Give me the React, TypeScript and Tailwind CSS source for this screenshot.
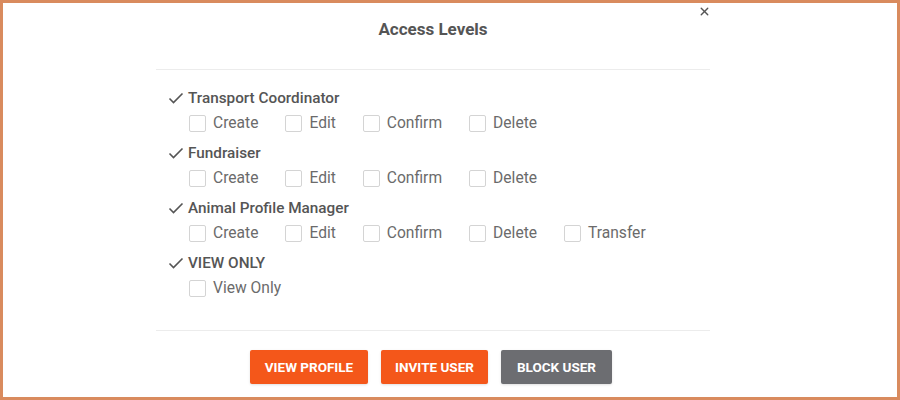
import { X } from 'lucide-react';

const groups = [
  { title: 'Transport Coordinator', perms: ['Create', 'Edit', 'Confirm', 'Delete'] },
  { title: 'Fundraiser', perms: ['Create', 'Edit', 'Confirm', 'Delete'] },
  { title: 'Animal Profile Manager', perms: ['Create', 'Edit', 'Confirm', 'Delete', 'Transfer'] },
  { title: 'VIEW ONLY', perms: ['View Only'] },
];

function Check() {
  return (
    <svg width="16" height="16" viewBox="0 0 16 16" className="shrink-0">
      <polyline points="1.5,8.5 5.5,12.5 14.5,3.5" fill="none" stroke="#555" strokeWidth="1.6" />
    </svg>
  );
}

export default function App() {
  return (
    <div className="relative w-[900px] h-[400px] bg-white border-[3px] border-[#d98b5e] font-['Roboto',sans-serif] overflow-hidden">
      <div className="ml-[153px] w-[554px] relative">
        {/* Header */}
        <div className="h-[67px] pt-[14px] border-b border-[#ececec] text-center">
          <h2 className="text-[17px] leading-6 font-bold text-[#555]">Access Levels</h2>
        </div>
        <button className="absolute -right-[1px] top-[2px] text-[#555]">
          <X size={13} strokeWidth={2.5} />
        </button>

        {/* Body */}
        <div className="pl-[12px] pt-[17px] pb-[29px] border-b border-[#ececec]">
          {groups.map((g) => (
            <div key={g.title} className="mb-[6px] last:mb-0">
              <div className="flex items-center gap-[4px] h-[22px]">
                <Check />
                <span className="text-[15.3px] font-medium text-[#555]">{g.title}</span>
              </div>
              <div className="flex items-center pl-[21px] h-[24px] mt-[3px]">
                {g.perms.map((p) => (
                  <label key={p} className="flex items-center mr-[27px]">
                    <span className="w-[17px] h-[17px] border border-[#d4d4d4] rounded-[2px] bg-white" />
                    <span className="ml-[7px] text-[15.6px] text-[#6b6b6b]">{p}</span>
                  </label>
                ))}
              </div>
            </div>
          ))}
        </div>

        {/* Footer */}
        <div className="flex justify-center gap-[13px] pt-[19px] pr-[4px]">
          <button className="h-[34px] w-[118px] rounded-[2px] bg-[#f4571a] text-white text-[13.5px] font-bold shadow-sm">VIEW PROFILE</button>
          <button className="h-[34px] w-[107px] rounded-[2px] bg-[#f4571a] text-white text-[13.5px] font-bold shadow-sm">INVITE USER</button>
          <button className="h-[34px] w-[111px] rounded-[2px] bg-[#6c6d71] text-white text-[13.5px] font-bold shadow-sm">BLOCK USER</button>
        </div>
      </div>
    </div>
  );
}
